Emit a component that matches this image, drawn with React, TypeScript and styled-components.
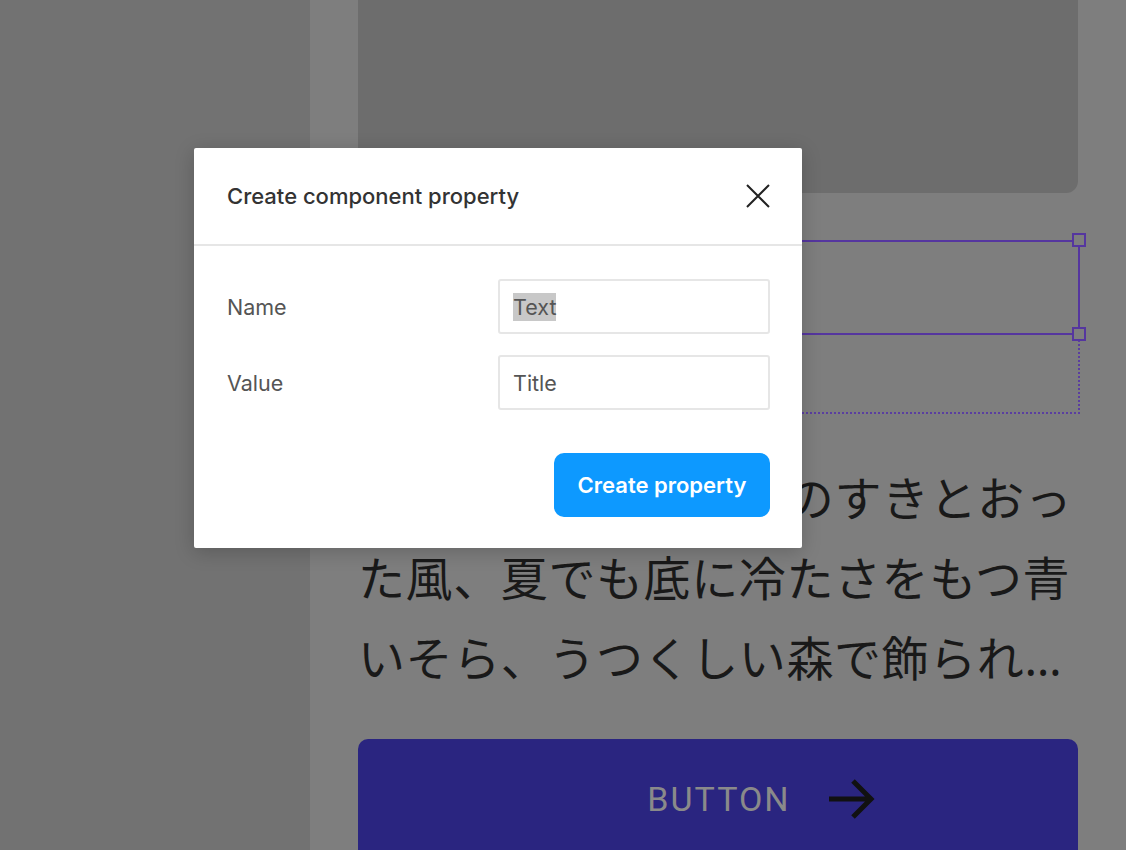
import React from 'react';
import styled, { createGlobalStyle } from 'styled-components';

const GlobalStyle = createGlobalStyle`
  html, body {
    margin: 0;
    padding: 0;
    background: #727272;
  }
  * {
    box-sizing: border-box;
  }
`;

const Page = styled.div`
  position: relative;
  display: flex;
  width: 1126px;
  height: 850px;
  overflow: hidden;
  font-family: Inter, 'Noto Sans', sans-serif;
`;

const SidePanel = styled.div`
  width: 310px;
  flex-shrink: 0;
  background: #727272;
`;

const Column = styled.div`
  flex: 1;
  display: flex;
  flex-direction: column;
  padding: 0 48px 0 48px;
  background: #7e7e7e;
  & > * {
    flex-shrink: 0;
  }
`;

const ImageCard = styled.div`
  height: 193px;
  border-radius: 0 0 12px 12px;
  background: #6d6d6d;
`;

const SelectionFrame = styled.div`
  position: relative;
  margin-top: 47px;
  margin-right: -2px;
  height: 174px;
  border: 2px dotted #5a3ea0;
  border-top: none;
`;

const SelectedBox = styled.div`
  margin: 0 -2px 0 -2px;
  height: 95px;
  border: 2px solid #55369f;
`;

const Handle = styled.span<{ $top: number }>`
  position: absolute;
  right: -8px;
  top: ${(p) => p.$top}px;
  width: 14px;
  height: 14px;
  border: 2px solid #55369f;
  background: #7e7e7e;
`;

const Lead = styled.p`
  margin: 44px 0 0 0;
  font-family: 'Noto Sans', 'Noto Sans CJK JP', sans-serif;
  font-size: 47px;
  letter-spacing: 0.6px;
  line-height: 80px;
  color: #191919;
  display: -webkit-box;
  -webkit-line-clamp: 3;
  -webkit-box-orient: vertical;
  overflow: hidden;
`;

const CtaButton = styled.div`
  margin-top: 41px;
  height: 130px;
  border-radius: 10px;
  background: #2a2580;
  display: flex;
  justify-content: center;
  padding: 37px 0 0 86px;
  gap: 36px;
  font-family: Roboto, 'Liberation Sans', sans-serif;
  font-size: 34px;
  letter-spacing: 2px;
  color: #8a8a8a;
`;

const CtaLabel = styled.span`
  line-height: 46px;
`;

const Modal = styled.div`
  position: absolute;
  left: 194px;
  top: 148px;
  width: 608px;
  background: #ffffff;
  border-radius: 2px;
  box-shadow: 0 4px 20px rgba(0, 0, 0, 0.2);
`;

const ModalHeader = styled.div`
  display: flex;
  align-items: center;
  justify-content: space-between;
  height: 98px;
  padding: 0 32px 0 33px;
  border-bottom: 2px solid #e6e6e6;
`;

const ModalTitle = styled.h2`
  margin: 0;
  font-size: 22px;
  font-weight: 500;
  color: #333333;
`;

const CloseButton = styled.button`
  display: flex;
  padding: 0;
  border: none;
  background: none;
  cursor: pointer;
`;

const ModalBody = styled.div`
  display: flex;
  flex-direction: column;
  padding: 33px 32px 31px 33px;
`;

const FieldRow = styled.div`
  display: grid;
  grid-template-columns: 1fr 272px;
  align-items: center;
  margin-bottom: 21px;
`;

const FieldLabel = styled.label`
  font-size: 21.5px;
  color: #555555;
`;

const FieldBox = styled.div`
  height: 55px;
  display: flex;
  align-items: center;
  padding: 0 13px;
  border: 2px solid #e6e6e6;
  border-radius: 3px;
  font-size: 21.5px;
  color: #555555;
`;

const Selected = styled.span`
  background: #c8c8c8;
  line-height: 28px;
`;

const Footer = styled.div`
  display: flex;
  justify-content: flex-end;
  margin-top: 22px;
`;

const PrimaryButton = styled.button`
  height: 64px;
  width: 216px;
  padding: 0;
  border: none;
  border-radius: 10px;
  background: #0d99ff;
  color: #ffffff;
  font-family: Inter, 'Noto Sans', sans-serif;
  font-size: 22px;
  font-weight: 600;
  cursor: pointer;
`;

const fields = [
  { label: 'Name', value: 'Text', selected: true },
  { label: 'Value', value: 'Title', selected: false },
];

const App = () => {
  return (
    <Page>
      <GlobalStyle />
      <SidePanel />
      <Column>
        <ImageCard />
        <SelectionFrame>
          <SelectedBox />
          <Handle $top={-7} />
          <Handle $top={87} />
        </SelectionFrame>
        <Lead>
          あのイーハトーヴォのすきとおった風、夏でも底に冷たさをもつ青いそら、うつくしい森で飾られたモリーオ市、郊外のぎらぎらひかる草の波。
        </Lead>
        <CtaButton>
          <CtaLabel>BUTTON</CtaLabel>
          <svg width='48' height='48' viewBox='0 0 48 48' fill='none'>
            <path d='M2 23 H44 M26 5 L44 23 L26 41' stroke='#111111' strokeWidth='5' />
          </svg>
        </CtaButton>
      </Column>

      <Modal>
        <ModalHeader>
          <ModalTitle>Create component property</ModalTitle>
          <CloseButton aria-label='Close'>
            <svg width='24' height='24' viewBox='0 0 24 24'>
              <path d='M1 1 L23 23 M23 1 L1 23' stroke='#222222' strokeWidth='2' />
            </svg>
          </CloseButton>
        </ModalHeader>
        <ModalBody>
          {fields.map((f) => (
            <FieldRow key={f.label}>
              <FieldLabel>{f.label}</FieldLabel>
              <FieldBox>{f.selected ? <Selected>{f.value}</Selected> : f.value}</FieldBox>
            </FieldRow>
          ))}
          <Footer>
            <PrimaryButton>Create property</PrimaryButton>
          </Footer>
        </ModalBody>
      </Modal>
    </Page>
  );
};

export default App;
